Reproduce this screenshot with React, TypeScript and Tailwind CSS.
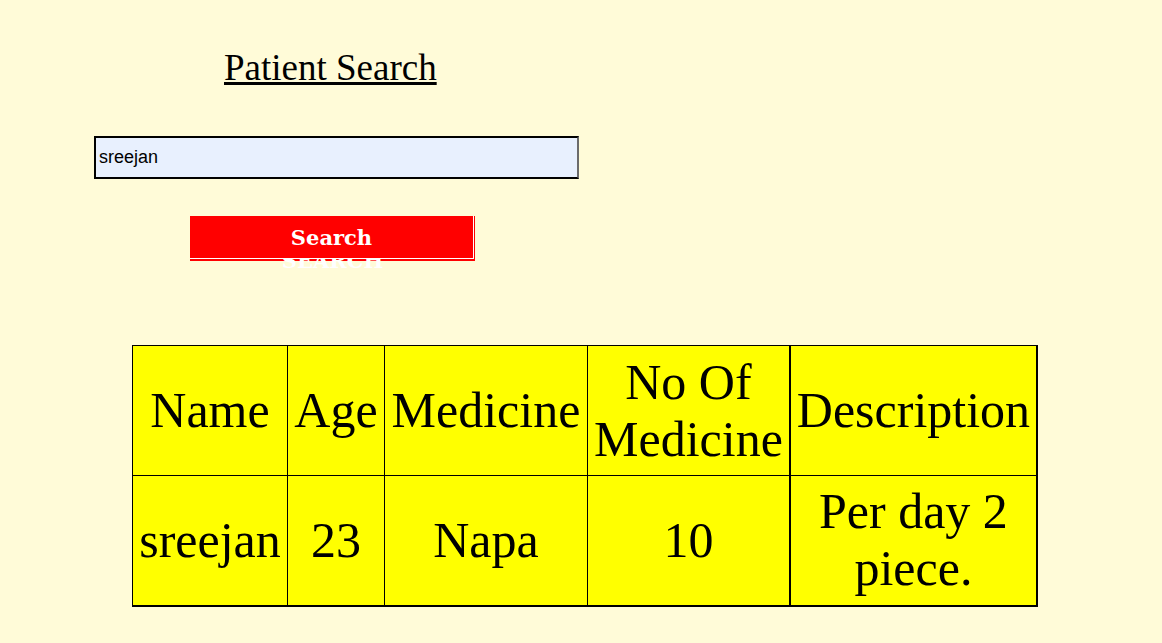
import React, { useState } from 'react';

type Patient = {
  name: string;
  age: number;
  medicine: string;
  count: number;
  description: string;
};

const PATIENTS: Patient[] = [
  { name: 'sreejan', age: 23, medicine: 'Napa', count: 10, description: 'Per day 2 piece.' },
];

const App: React.FC = () => {
  const [query, setQuery] = useState('sreejan');

  const cell = 'border border-black px-[6px] text-center align-middle font-normal';

  return (
    <div className="min-h-screen bg-[#fffbd8] text-black font-['Liberation_Serif','Times_New_Roman',serif] pt-[47px]">
      <h1 className="ml-[224px] text-[37px] leading-[42px] underline font-normal">Patient Search</h1>

      {/* search box */}
      <input
        value={query}
        onChange={e => setQuery(e.target.value)}
        className="block mt-[47px] ml-[94px] w-[485px] h-[43px] border-2 border-black border-r-[#6b6b6b] bg-[#e8f0fe] px-[3px] text-[18px] font-['Liberation_Sans',Arial,sans-serif] outline-none"
      />

      {/* search button */}
      <div className="relative mt-[37px] ml-[190px] w-[285px] h-[45px] bg-[#ff0000]">
        <span className="absolute left-0 right-0 top-[33px] text-center text-white text-[21px] leading-[23px] font-bold font-['DejaVu_Serif',Georgia,serif]">
          SEARCH
        </span>
        <button className="relative z-[1] block w-[284px] h-[43px] bg-[#ff0000] border-r border-b border-white text-white text-[21px] leading-[23px] font-bold font-['DejaVu_Serif',Georgia,serif]">
          Search
        </button>
      </div>

      {/* results */}
      <table className="mt-[84px] ml-[132px] border-collapse border-t border-l border-r-2 border-b-2 border-black bg-[#ffff00] text-[50px] leading-[57px]">
        <thead>
          <tr className="h-[130px]">
            <th className={`${cell} w-[155px]`}>Name</th>
            <th className={`${cell} w-[97px]`}>Age</th>
            <th className={`${cell} w-[203px]`}>Medicine</th>
            <th className={`${cell} w-[202px]`}>No Of Medicine</th>
            <th className={`${cell} w-[247px] border-l-2`}>Description</th>
          </tr>
        </thead>
        <tbody>
          {PATIENTS.map(p => (
            <tr key={p.name} className="h-[130px]">
              <td className={cell}>{p.name}</td>
              <td className={cell}>{p.age}</td>
              <td className={cell}>{p.medicine}</td>
              <td className={cell}>{p.count}</td>
              <td className={`${cell} border-l-2`}>{p.description}</td>
            </tr>
          ))}
        </tbody>
      </table>
    </div>
  );
};

export default App;
